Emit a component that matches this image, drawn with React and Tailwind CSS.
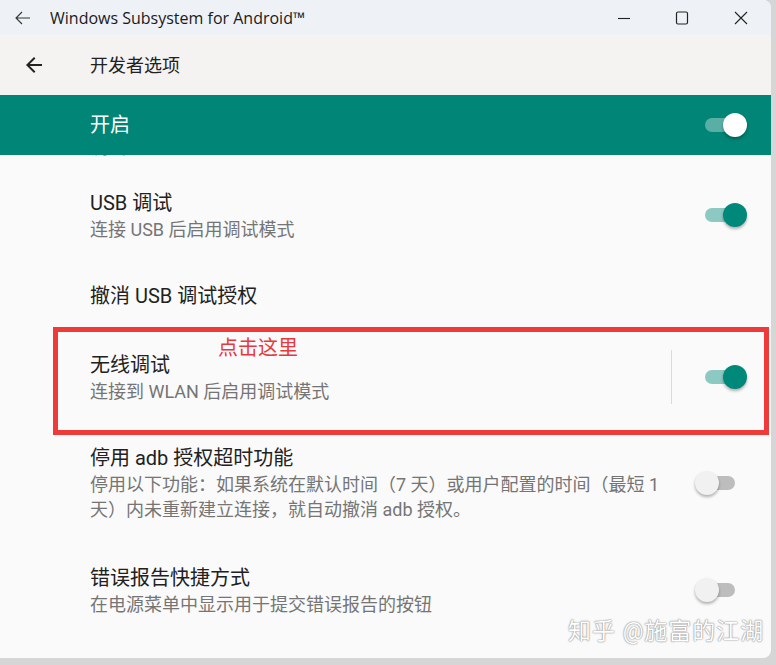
const font = { fontFamily: 'Roboto, "Noto Sans CJK SC", sans-serif' };

function Switch({ on, light }) {
  const track = light ? 'bg-white/35' : on ? 'bg-[#8cc9c2]' : 'bg-[#bdbdbd]';
  const thumb = light ? 'bg-white' : on ? 'bg-[#00897b]' : 'bg-[#f1f1f1]';
  return (
    <div className="relative w-[44px] h-[26px] shrink-0">
      <div className={`absolute left-[2px] top-[6px] w-[38px] h-[14px] rounded-full ${track}`} />
      <div
        className={`absolute top-px w-[24px] h-[24px] rounded-full shadow-[0_2px_3px_rgba(0,0,0,0.3)] ${thumb} ${on ? 'left-[20px]' : 'left-0'}`}
      />
    </div>
  );
}

function Row({ title, sub, toggle, height, pr = 'pr-[24px]', divider }) {
  return (
    <div className={`flex items-center pl-[90px] ${pr}`} style={{ height }}>
      <div className="flex-1 min-w-0">
        <div className="text-[20px] leading-[28px] text-[#212121]">{title}</div>
        {sub && <div className="text-[18px] leading-[25px] text-[#757575] max-w-[576px]">{sub}</div>}
      </div>
      {divider && <div className="w-px h-[54px] bg-[#dadada] mr-[31px]" />}
      {toggle}
    </div>
  );
}

export default function App() {
  return (
    <div className="w-[776px] h-[665px] bg-[#d6d6d6] overflow-hidden" style={font}>
      <div className="relative w-[771px] h-[658px] bg-[#fafafa] rounded-tr-[8px] rounded-br-[8px] overflow-hidden">
        {/* title bar */}
        <div className="h-[35px] bg-[#eef2f7] flex items-center">
          <svg className="ml-[14px]" width="18" height="18" viewBox="0 0 18 18" fill="none" stroke="#333" strokeWidth="1.1">
            <path d="M16 9H2M8 3L2 9l6 6" />
          </svg>
          <span className="ml-[18px] text-[16px] text-[#1a1a1a]" style={{ fontFamily: '"Open Sans", sans-serif' }}>
            Windows Subsystem for Android™
          </span>
          <div className="flex-1" />
          <svg width="14" height="14" viewBox="0 0 14 14" className="mr-[44px]">
            <path d="M1 7.5h12" stroke="#222" strokeWidth="1.1" />
          </svg>
          <svg width="14" height="14" viewBox="0 0 14 14" className="mr-[45px]">
            <rect x="1.5" y="1" width="11" height="12" rx="1.5" fill="none" stroke="#222" strokeWidth="1.2" />
          </svg>
          <svg width="14" height="14" viewBox="0 0 14 14" className="mr-[23px]">
            <path d="M1 1l12 12M13 1L1 13" stroke="#222" strokeWidth="1.1" />
          </svg>
        </div>

        {/* app bar */}
        <div className="h-[60px] bg-[#f5f3f2] flex items-center">
          <svg className="ml-[22px]" width="24" height="24" viewBox="0 0 24 24">
            <path d="M20 11H7.83l5.59-5.59L12 4l-8 8 8 8 1.41-1.41L7.83 13H20v-2z" fill="#222" />
          </svg>
          <span className="ml-[44px] text-[18px] text-[#212121]">开发者选项</span>
        </div>

        {/* master switch */}
        <div className="h-[60px] bg-[#008577] flex items-center pl-[90px] pr-[24px]">
          <span className="flex-1 text-[20px] text-white">开启</span>
          <Switch on light />
        </div>

        {/* list */}
        <div className="h-[17px] overflow-hidden pl-[90px]">
          <div className="-mt-[20px] text-[18px] leading-[25px] text-[#9a9a9a]">调试</div>
        </div>
        <Row height={86} title="USB 调试" sub="连接 USB 后启用调试模式" toggle={<Switch on />} />
        <Row height={76} title="撤消 USB 调试授权" />
        <Row height={86} title="无线调试" sub="连接到 WLAN 后启用调试模式" toggle={<Switch on />} divider />
        <Row
          height={126}
          pr="pr-[32px]"
          title="停用 adb 授权超时功能"
          sub="停用以下功能：如果系统在默认时间（7 天）或用户配置的时间（最短 1 天）内未重新建立连接，就自动撤消 adb 授权。"
          toggle={<Switch />}
        />
        <Row
          height={88}
          pr="pr-[32px]"
          title="错误报告快捷方式"
          sub="在电源菜单中显示用于提交错误报告的按钮"
          toggle={<Switch />}
        />

        {/* annotation */}
        <div className="absolute left-[53px] top-[327px] w-[716px] h-[108px] border-[5px] border-[#ef3a3a]" />
        <div className="absolute left-[218px] top-[335px] text-[20px] leading-[26px] text-[#e8383a]">点击这里</div>

        {/* watermark */}
        <div
          className="absolute left-[568px] top-[615px] text-[23px] text-white tracking-[1px] [text-shadow:0_0_1px_#777,0_0_2px_#999]"
        >
          知乎 @施富的江湖
        </div>
      </div>
    </div>
  );
}
